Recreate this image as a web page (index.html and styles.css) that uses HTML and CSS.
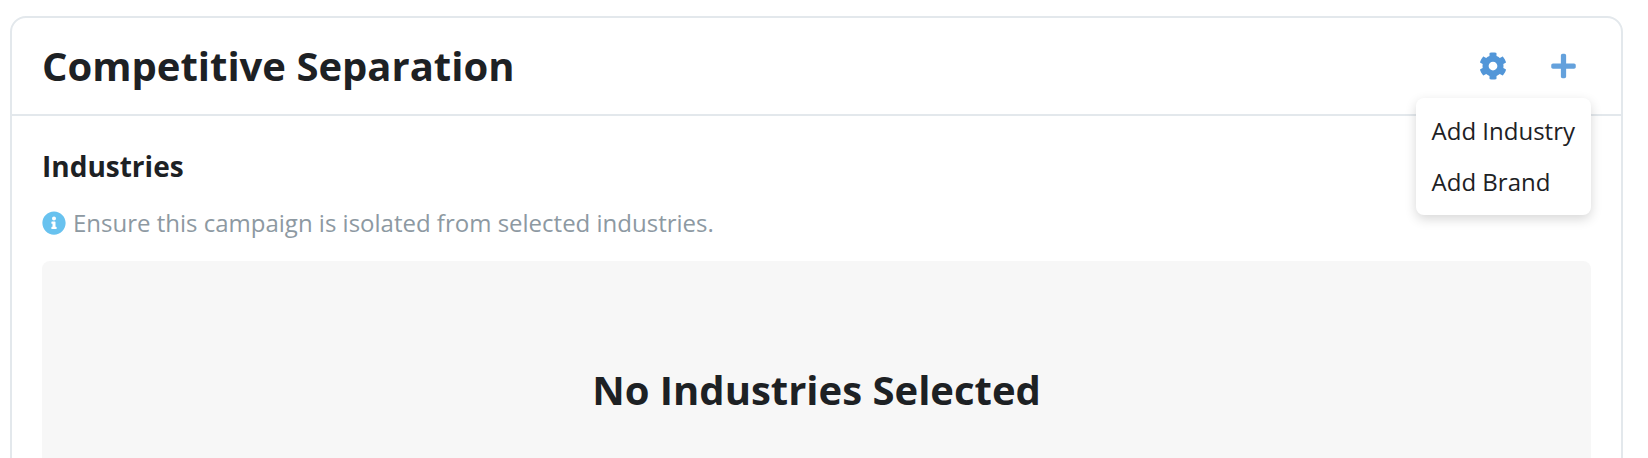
FILE: index.html
```html
<!DOCTYPE html>
<html lang="en">
<head>
  <meta charset="UTF-8" />
  <meta name="viewport" content="width=device-width, initial-scale=1.0"/>
  <title>Competitive Separation</title>
  <link rel="stylesheet" href="styles.css">
</head>
<body>
  <section class="card">
    <header class="card-header">
      <h1 class="title">Competitive Separation</h1>
      <div class="actions">
        <button class="icon-button settings" type="button" aria-label="Settings">
          <svg width="28" height="28" viewBox="0 0 512 512" fill="currentColor"><path d="M487.4 315.7l-42.6-24.6c4.3-23.2 4.3-47 0-70.2l42.6-24.6c4.9-2.8 7.1-8.6 5.5-14-11.1-35.6-30-67.8-54.7-94.6-3.8-4.1-10-5.1-14.8-2.3L380.8 110c-17.9-15.4-38.5-27.3-60.8-35.1V25.8c0-5.6-3.9-10.5-9.4-11.7-36.7-8.2-74.3-7.8-109.2 0-5.5 1.2-9.4 6.1-9.4 11.7V75c-22.2 7.9-42.8 19.8-60.8 35.1L88.7 85.5c-4.9-2.8-11-1.9-14.8 2.3-24.7 26.7-43.6 58.9-54.7 94.6-1.7 5.4.6 11.2 5.5 14L67.3 221c-4.3 23.2-4.3 47 0 70.2l-42.6 24.6c-4.9 2.8-7.1 8.6-5.5 14 11.1 35.6 30 67.8 54.7 94.6 3.8 4.1 10 5.1 14.8 2.3l42.6-24.6c17.9 15.4 38.5 27.3 60.8 35.1v49.2c0 5.6 3.9 10.5 9.4 11.7 36.7 8.2 74.3 7.8 109.2 0 5.5-1.2 9.4-6.1 9.4-11.7v-49.2c22.2-7.9 42.8-19.8 60.8-35.1l42.6 24.6c4.9 2.8 11 1.9 14.8-2.3 24.7-26.7 43.6-58.9 54.7-94.6 1.5-5.5-.7-11.3-5.6-14.1zM256 336c-44.1 0-80-35.9-80-80s35.9-80 80-80 80 35.9 80 80-35.9 80-80 80z"/></svg>
        </button>
        <div class="dropdown">
          <button class="icon-button add" type="button" aria-label="Add" aria-haspopup="true" aria-expanded="true">
            <svg width="25" height="28" viewBox="0 0 448 512" fill="currentColor"><path d="M416 208H272V64c0-17.67-14.33-32-32-32h-32c-17.67 0-32 14.33-32 32v144H32c-17.67 0-32 14.33-32 32v32c0 17.67 14.33 32 32 32h144v144c0 17.67 14.33 32 32 32h32c17.67 0 32-14.33 32-32V304h144c17.67 0 32-14.33 32-32v-32c0-17.67-14.33-32-32-32z"/></svg>
          </button>
          <div class="menu">
            <button class="menu-item" type="button">Add Industry</button>
            <button class="menu-item" type="button">Add Brand</button>
          </div>
        </div>
      </div>
    </header>

    <div class="card-body">
      <h2 class="section-title">Industries</h2>
      <p class="help">
        <svg width="24" height="24" viewBox="0 0 512 512" fill="currentColor"><path d="M256 8C119.043 8 8 119.083 8 256c0 136.997 111.043 248 248 248s248-111.003 248-248C504 119.083 392.957 8 256 8zm0 110c23.196 0 42 18.804 42 42s-18.804 42-42 42-42-18.804-42-42 18.804-42 42-42zm56 254c0 6.627-5.373 12-12 12h-88c-6.627 0-12-5.373-12-12v-24c0-6.627 5.373-12 12-12h12v-64h-12c-6.627 0-12-5.373-12-12v-24c0-6.627 5.373-12 12-12h64c6.627 0 12 5.373 12 12v100h12c6.627 0 12 5.373 12 12v24z"/></svg>
        <span>Ensure this campaign is isolated from selected industries.</span>
      </p>
      <div class="empty">
        <h3 class="title">No Industries Selected</h3>
      </div>
    </div>
  </section>
</body>
</html>
```
FILE: styles.css
```css
* {
  box-sizing: border-box;
}

body {
  margin: 0;
  padding: 16px 25px 0 10px;
  height: 100vh;
  overflow: hidden;
  background: #fff;
  color: #1d2124;
  font-family: "Open Sans", sans-serif;
  font-size: 24px;
}

h1, h2, h3, p {
  margin: 0;
}

.card {
  border: 2px solid #e3e8ec;
  border-radius: 16px;
}

.card-header {
  display: flex;
  justify-content: space-between;
  align-items: center;
  padding: 16px 30px;
  border-bottom: 2px solid #e3e8ec;
}

.title {
  font-size: 40px;
  font-weight: 700;
  line-height: 54px;
}

.actions {
  display: flex;
  gap: 14px;
}

.icon-button {
  display: block;
  padding: 18px 15px;
  border: none;
  background: none;
  cursor: pointer;
}

.icon-button svg {
  display: block;
}

.settings {
  color: #5296d8;
}

.add {
  color: #64a1dc;
}

.dropdown {
  position: relative;
}

.menu {
  position: absolute;
  top: 100%;
  right: 0;
  padding: 7px 0 8px;
  border-radius: 8px;
  background: #fff;
  box-shadow: 0 4px 12px rgba(0, 0, 0, 0.16);
}

.menu-item {
  display: block;
  width: 100%;
  padding: 8px 16px;
  border: none;
  background: none;
  color: inherit;
  font: inherit;
  line-height: 35px;
  text-align: left;
  white-space: nowrap;
  cursor: pointer;
}

.card-body {
  display: flex;
  flex-direction: column;
  gap: 21px;
  padding: 31px 30px;
}

.section-title {
  font-size: 28px;
  font-weight: 700;
  line-height: 38px;
}

.help {
  display: flex;
  align-items: center;
  gap: 7px;
  color: #8d99a2;
  line-height: 34px;
}

.help svg {
  color: #68c2ef;
}

.empty {
  padding: 102px 30px;
  border-radius: 8px;
  background: #f7f7f7;
  text-align: center;
}
```
